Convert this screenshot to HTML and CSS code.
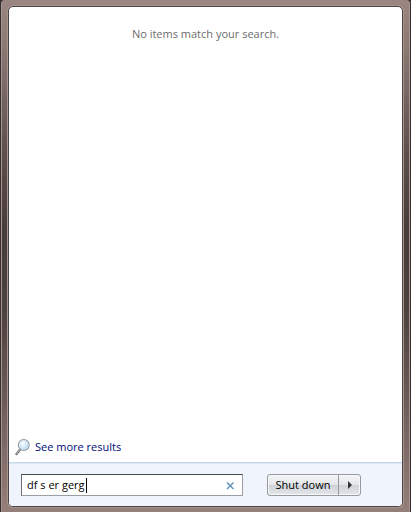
FILE: index.html
```
<!DOCTYPE html>
<html lang="en">
<head>
    <meta charset="UTF-8">
    <meta name="viewport" content="width=device-width, initial-scale=1.0">
    <title>Start menu search</title>
    <link rel="stylesheet" href="styles.css">
</head>
<body>
<div class="start-menu">
    <main class="panel">
        <section class="results">
            <p class="empty">No items match your search.</p>
            <a class="more" href="#">
                <svg class="more-icon" width="16" height="18" viewBox="0 0 16 18" aria-hidden="true">
                    <defs>
                        <radialGradient id="lens" cx="0.4" cy="0.35" r="0.7">
                            <stop offset="0" stop-color="#f6fcff"/>
                            <stop offset="0.6" stop-color="#cde7f8"/>
                            <stop offset="1" stop-color="#9cc4e4"/>
                        </radialGradient>
                    </defs>
                    <path d="M1.5 16 L5.5 11" stroke="#77797b" stroke-width="2.4" stroke-linecap="round"/>
                    <path d="M1.6 15.4 L5.2 11" stroke="#c3c5c7" stroke-width="0.8" stroke-linecap="round"/>
                    <circle cx="8.8" cy="7" r="5.4" fill="url(#lens)" stroke="#93999f" stroke-width="1.2"/>
                    <circle cx="8.8" cy="7" r="4.5" fill="none" stroke="#e3edf4" stroke-width="0.7"/>
                </svg>
                <span>See more results</span>
            </a>
        </section>
        <form class="footer">
            <div class="search">
                <input class="search-input" type="text" value="df s er gerg" aria-label="Search programs and files">
                <span class="caret"></span>
                <button class="clear" type="button" aria-label="Clear search">
                    <svg width="9" height="9" viewBox="0 0 9 9" aria-hidden="true">
                        <path d="M1 1.5 L7.5 8 M7.5 1.5 L1 8" stroke="#5b8db8" stroke-width="1.3"/>
                    </svg>
                </button>
            </div>
            <div class="power">
                <button class="shutdown" type="button">Shut down</button>
                <button class="power-more" type="button" aria-label="More power options">
                    <svg width="4" height="8" viewBox="0 0 4 8" aria-hidden="true">
                        <path d="M0 0 L4 4 L0 8 Z" fill="#333"/>
                    </svg>
                </button>
            </div>
        </form>
    </main>
</div>
</body>
</html>
```
FILE: styles.css
```
* {
    box-sizing: border-box;
    margin: 0;
    padding: 0;
}
body {
    background: #35302f;
    font-family: "Open Sans", "Noto Sans", sans-serif;
    font-size: 11px;
    line-height: 16px;
}
button,
input {
    font: inherit;
    color: #000;
}

/* Glass frame */
.start-menu {
    display: flex;
    min-height: 100vh;
    margin: 0 1px;
    padding: 6px 6px 5px;
    border: 1px solid #a8938e;
    border-width: 0 1px;
    border-radius: 4px 4px 0 0;
    background: linear-gradient(#9b8681 0, #8c7974 9%, #5c4f4c 30%, #463c3a 45%, #4b413f 60%, #6b5b58 78%, #8b7571 94%, #957f7a 100%);
}
.panel {
    flex: 1;
    display: flex;
    flex-direction: column;
    border: 1px solid #4c4444;
    border-radius: 5px;
    box-shadow: 0 0 0 1px #a8938e;
    background: #fff;
    overflow: hidden;
}

/* Results */
.results {
    flex: 1;
    display: flex;
    flex-direction: column;
    justify-content: space-between;
    align-items: flex-start;
    padding: 19px 6px 6px;
}
.empty {
    align-self: stretch;
    text-align: center;
    color: #6d6d6d;
}
.more {
    display: flex;
    align-items: center;
    gap: 4px;
    color: #000a7c;
    text-decoration: none;
}

/* Search box and power buttons */
.footer {
    display: flex;
    align-items: center;
    gap: 24px;
    padding: 11px 41px 10px 12px;
    border-top: 1px solid #c5d7ea;
    background: #f0f4fc;
    box-shadow: inset 0 1px #dee8f5;
}
.search {
    flex: 1;
    display: flex;
    align-items: center;
    position: relative;
    height: 22px;
    padding: 0 7px 0 5px;
    border: 1px solid #9a9da1;
    border-top-color: #46484b;
    border-left-color: #6b6e72;
    background: #fff;
}
.search-input {
    flex: 1;
    min-width: 0;
    border: 0;
    outline: 0;
    background: none;
}
.caret {
    position: absolute;
    left: 64px;
    top: 3px;
    width: 1px;
    height: 15px;
    background: #000;
}
.clear {
    display: flex;
    border: 0;
    background: none;
}
.power {
    display: flex;
    height: 22px;
    border: 1px solid #96999d;
    border-radius: 3px;
    background: linear-gradient(#f4f5f7, #e4e6e9 48%, #cfd2d6 52%, #e3e6ea);
    box-shadow: inset 0 0 0 1px #f7f8fa;
}
.shutdown,
.power-more {
    display: flex;
    align-items: center;
    justify-content: center;
    border: 0;
    background: none;
}
.shutdown {
    width: 70px;
}
.power-more {
    width: 22px;
    border-left: 1px solid #96999d;
}
```
